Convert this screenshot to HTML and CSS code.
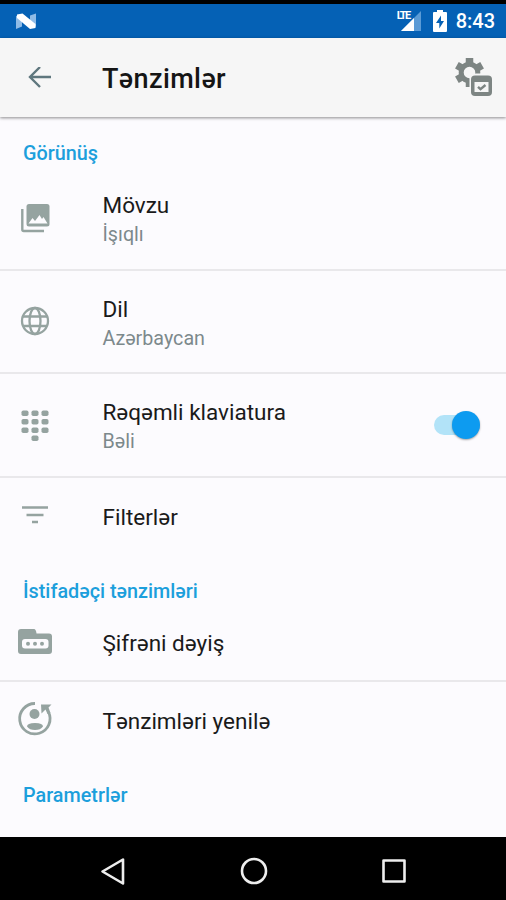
FILE: index.html
```html
<!DOCTYPE html>
<html lang="az">
<head>
  <meta charset="UTF-8">
  <meta name="viewport" content="width=device-width,initial-scale=1.0">
  <title>Tənzimlər</title>
  <link rel="stylesheet" href="styles.css">
</head>
<body>
  <div class="screen">
    <!-- status bar -->
    <div class="statusbar">
      <svg class="logo" viewBox="0 0 22 17" width="22" height="17">
        <path fill="#8fbbe6" d="M1 3l6-2v12.500l-6 2.500zM15 2.500l6-2v13l-6 2z"/>
        <path fill="#fff" d="M2 1.500L7.500 .5L20.500 11v4L15 16L2 5z"/>
      </svg>
      <div class="status-icons">
        <div class="network">
          <svg viewBox="0 0 26 22" width="26" height="22">
            <path fill="#5b9bd6" d="M25 1v20H5z"/>
            <path fill="#fff" d="M18 8v13H5z"/>
          </svg>
          <span class="lte">LTE</span>
        </div>
        <svg class="battery" viewBox="0 0 14 22" width="14" height="22">
          <path fill="#fff" d="M4 0h6v2h3q1 0 1 1v18q0 1-1 1H1q-1 0-1-1V3q0-1 1-1h3z"/>
          <path fill="#0561b5" d="M8 5.500L3 13h3.300v5.500L11 11H8z"/>
        </svg>
        <span class="clock">8:43</span>
      </div>
    </div>

    <!-- app bar -->
    <header class="appbar">
      <svg class="back" viewBox="0 0 24 22" width="24" height="22" fill="none" stroke="#5f777e" stroke-width="2.400">
        <path d="M23 10H2M12 0L2 10l10 10"/>
      </svg>
      <h1>Tənzimlər</h1>
      <svg class="gear" viewBox="0 0 40 40" width="40" height="40">
        <g fill="none" stroke="#7d8583">
          <circle cx="16.500" cy="14.500" r="8.300" stroke-width="5"/>
          <path stroke-width="7.500" d="M16.500 5.500V0M16.500 23.500v5.500M8.700 10L3.900 7.300M8.700 19l-4.800 2.700M24.300 10l4.800-2.700"/>
        </g>
        <rect x="16.500" y="15.500" width="24" height="25" rx="5" fill="#f6f6f6"/>
        <rect x="18" y="17.500" width="21" height="20.500" rx="4" fill="#7d8583"/>
        <path fill="#f6f6f6" d="M21.500 24h14v10h-14z"/>
        <path fill="none" stroke="#7d8583" stroke-width="2.400" d="M25 28.800l2.500 2.300L32.500 27"/>
      </svg>
    </header>

    <!-- settings list -->
    <main class="settings">
      <h2>Görünüş</h2>
      <div class="row tall line">
        <svg class="icon" viewBox="0 0 40 40">
          <path fill="none" stroke="#95a3a0" stroke-width="2.400" d="M7.300 11v20.500q0 1.500 1.500 1.500H29"/>
          <rect x="11.500" y="6" width="23" height="22.500" rx="2.500" fill="#95a3a0"/>
          <path fill="#fcfbfe" d="M13.500 25.500l4-5.500 2.500 3 4.500-6 2.500 4 1.500-2 4 6.500z"/>
        </svg>
        <div class="text">
          <div class="title">Mövzu</div>
          <div class="sub">İşıqlı</div>
        </div>
      </div>
      <div class="row tall line">
        <svg class="icon" viewBox="0 0 40 40" fill="none" stroke="#95a3a0" stroke-width="2.300">
          <circle cx="20" cy="20" r="13"/>
          <ellipse cx="20" cy="20" rx="5.500" ry="13"/>
          <path d="M8 15.500h24M8 25h24"/>
        </svg>
        <div class="text">
          <div class="title">Dil</div>
          <div class="sub">Azərbaycan</div>
        </div>
      </div>
      <div class="row tall line">
        <svg class="icon" viewBox="0 0 40 40" fill="#95a3a0">
          <rect x="6.500" y="5.500" width="7" height="5.500" rx="1.800"/>
          <rect x="16.500" y="5.500" width="7" height="5.500" rx="1.800"/>
          <rect x="26.500" y="5.500" width="7" height="5.500" rx="1.800"/>
          <rect x="6.500" y="14" width="7" height="5.500" rx="1.800"/>
          <rect x="16.500" y="14" width="7" height="5.500" rx="1.800"/>
          <rect x="26.500" y="14" width="7" height="5.500" rx="1.800"/>
          <rect x="6.500" y="22.500" width="7" height="5.500" rx="1.800"/>
          <rect x="16.500" y="22.500" width="7" height="5.500" rx="1.800"/>
          <rect x="26.500" y="22.500" width="7" height="5.500" rx="1.800"/>
          <rect x="16.500" y="30.500" width="7" height="5.500" rx="1.800"/>
        </svg>
        <div class="text">
          <div class="title">Rəqəmli klaviatura</div>
          <div class="sub">Bəli</div>
        </div>
        <div class="switch"><span class="thumb"></span></div>
      </div>
      <div class="row">
        <svg class="icon" viewBox="0 0 40 40" fill="none" stroke="#95a3a0" stroke-width="2.400">
          <path d="M7 11.500h26M11.500 19h17M17 26h6"/>
        </svg>
        <div class="title">Filterlər</div>
      </div>

      <h2>İstifadəçi tənzimləri</h2>
      <div class="row line">
        <svg class="icon" viewBox="0 0 40 40">
          <path fill="#95a3a0" d="M6 7h13q2 0 2.500 4.500H34q3 0 3 3V29q0 3-3 3H6q-3 0-3-3V10q0-3 3-3z"/>
          <rect x="7" y="17" width="26.500" height="9.500" rx="3" fill="#fcfbfe"/>
          <circle cx="13" cy="21.700" r="2" fill="#95a3a0"/>
          <circle cx="20" cy="21.700" r="2" fill="#95a3a0"/>
          <circle cx="27" cy="21.700" r="2" fill="#95a3a0"/>
        </svg>
        <div class="title">Şifrəni dəyiş</div>
      </div>
      <div class="row">
        <svg class="icon" viewBox="0 0 40 40">
          <path fill="none" stroke="#95a3a0" stroke-width="2.800" d="M20 3.500A15.200 15.200 0 1 0 33.500 12"/>
          <path fill="#95a3a0" d="M26 4.500h10.500l-3 3 2 5.500-3 1-2-4.500-4 4z"/>
          <circle cx="19.500" cy="14" r="5" fill="#95a3a0"/>
          <path fill="#95a3a0" d="M12 26.500q0-3.500 8-3.500t8 3.500q-2.500 3.500-8 3.500t-8-3.500z"/>
        </svg>
        <div class="title">Tənzimləri yenilə</div>
      </div>

      <h2>Parametrlər</h2>
    </main>

    <!-- system navigation -->
    <nav class="navbar">
      <svg viewBox="0 0 30 30" width="30" height="30"><path d="M25 3.500v24L4.500 15.500z"/></svg>
      <svg viewBox="0 0 30 30" width="30" height="30"><circle cx="15" cy="15" r="12"/></svg>
      <svg viewBox="0 0 30 30" width="30" height="30"><rect x="4.500" y="4.500" width="21" height="21"/></svg>
    </nav>
  </div>
</body>
</html>
```
FILE: styles.css
```css
* {
  box-sizing: border-box;
}
body {
  margin: 0;
  background: #000;
  font-family: Roboto, "Noto Sans", sans-serif;
}
h1, h2 {
  margin: 0;
  font-weight: 500;
}
svg {
  display: block;
  flex: none;
}
.screen {
  width: 506px;
  height: 900px;
  padding-top: 4px;
  display: flex;
  flex-direction: column;
  overflow: hidden;
  background: #000;
}

/* status bar */
.statusbar {
  height: 34px;
  padding: 0 11px 0 15px;
  display: flex;
  justify-content: space-between;
  align-items: center;
  background: #0561b5;
  color: #fff;
}
.status-icons {
  display: flex;
  align-items: center;
}
.network {
  position: relative;
  margin-right: 11px;
}
.lte {
  position: absolute;
  left: 1px;
  top: 1px;
  font-size: 11px;
  line-height: 10px;
  font-weight: 700;
  letter-spacing: -1.6px;
}
.clock {
  margin-left: 9px;
  font-size: 20px;
  font-weight: 500;
}

/* app bar */
.appbar {
  position: relative;
  height: 79px;
  padding: 0 13px 0 28px;
  display: flex;
  align-items: center;
  background: #f6f6f6;
  box-shadow: 0 1px 3px rgba(0,0,0,.45);
}
.appbar h1 {
  flex: 1;
  margin-left: 50px;
  padding-top: 2px;
  font-size: 27px;
  letter-spacing: .4px;
  color: #151515;
}

/* list */
.settings {
  flex: 1;
  min-height: 0;
  background: #fcfbfe;
}
.settings h2 {
  height: 50px;
  padding: 24px 0 0 23px;
  font-size: 19.8px;
  line-height: 26px;
  color: #1c9fdc;
}
.row {
  height: 77px;
  padding: 0 26px 0 15px;
  display: flex;
  align-items: center;
}
.row.tall {
  height: 103.5px;
}
.row.line {
  border-bottom: 2px solid #e9e8eb;
}
.icon {
  width: 40px;
  height: 40px;
  margin-right: 47.5px;
}
.text {
  padding-top: 5px;
}
.title {
  padding-top: 1px;
  font-size: 22.5px;
  line-height: 30px;
  color: #1a1a1a;
}
.text .title {
  padding-top: 0;
  line-height: 29px;
}
.sub {
  padding-top: 1px;
  font-size: 19.7px;
  line-height: 28px;
  color: #7c898c;
}
.switch {
  display: flex;
  justify-content: flex-end;
  align-items: center;
  width: 46px;
  height: 20px;
  margin-left: auto;
  border-radius: 10px;
  background: #b2e3f8;
}
.thumb {
  width: 28px;
  height: 28px;
  flex: none;
  border-radius: 50%;
  background: #0d9bf0;
  box-shadow: 0 1px 2px rgba(0,0,0,.35);
}

/* navigation */
.navbar {
  height: 63px;
  padding: 4px 97px 0 98px;
  display: flex;
  justify-content: space-between;
  align-items: center;
  background: #000;
}
.navbar svg {
  fill: none;
  stroke: #eee;
  stroke-width: 2.6;
  stroke-linejoin: round;
}
```
